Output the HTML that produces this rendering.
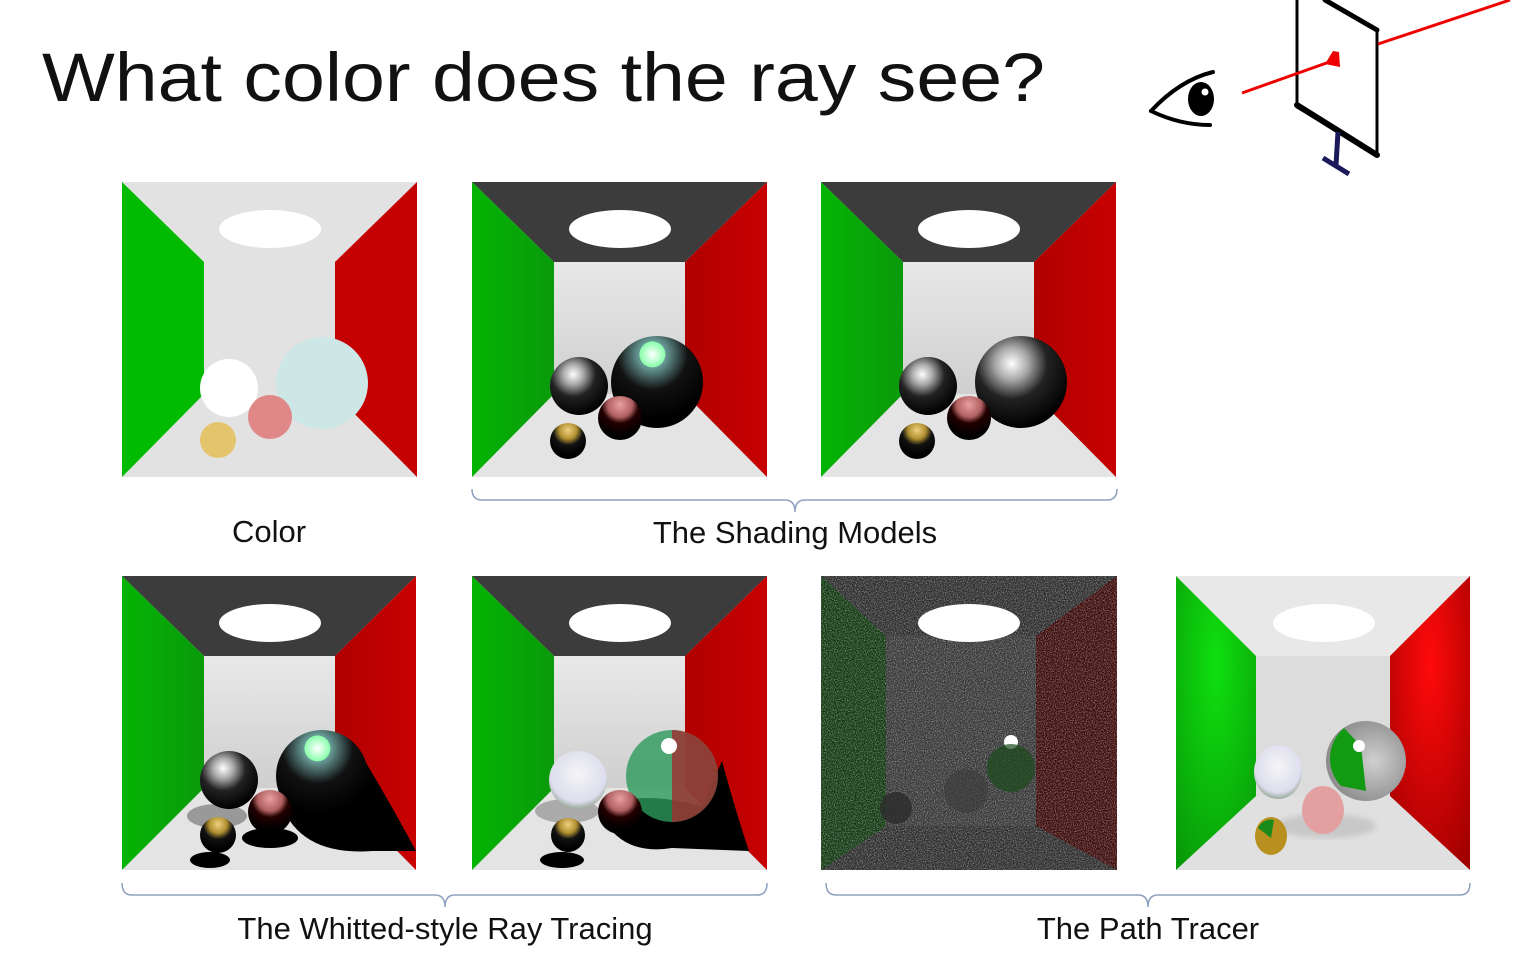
<!DOCTYPE html>
<html><head><meta charset="utf-8"><style>
html,body{margin:0;padding:0;background:#fff;width:1519px;height:967px;overflow:hidden}
svg{display:block}
text{font-family:"Liberation Sans",sans-serif;fill:#111}
</style></head><body>
<svg width="1519" height="967" viewBox="0 0 1519 967" xmlns="http://www.w3.org/2000/svg">
<defs>
<radialGradient id="blk" cx="0.4" cy="0.3" r="0.7"><stop offset="0" stop-color="#fff"/><stop offset="0.25" stop-color="#aaa"/><stop offset="0.55" stop-color="#222"/><stop offset="1" stop-color="#000"/></radialGradient>
<radialGradient id="blkc" cx="0.45" cy="0.2" r="0.7"><stop offset="0" stop-color="#fff"/><stop offset="0.2" stop-color="#8fa"/><stop offset="0.2" stop-color="#6a9e9a"/><stop offset="0.55" stop-color="#111"/><stop offset="1" stop-color="#000"/></radialGradient>
<radialGradient id="pnk" cx="0.5" cy="0.2" r="0.7"><stop offset="0" stop-color="#e8a0a0"/><stop offset="0.4" stop-color="#b06060"/><stop offset="0.6" stop-color="#200"/><stop offset="1" stop-color="#000"/></radialGradient>
<radialGradient id="gld" cx="0.5" cy="0.2" r="0.7"><stop offset="0" stop-color="#f0d080"/><stop offset="0.35" stop-color="#b09030"/><stop offset="0.6" stop-color="#111"/><stop offset="1" stop-color="#000"/></radialGradient>
<linearGradient id="back" x1="0" y1="0" x2="0" y2="1"><stop offset="0" stop-color="#e8e8e8"/><stop offset="1" stop-color="#cfcfcf"/></linearGradient>
<linearGradient id="gw" x1="0" y1="0" x2="1" y2="0"><stop offset="0" stop-color="#04b404"/><stop offset="1" stop-color="#0a9a0a"/></linearGradient>
<linearGradient id="rw" x1="0" y1="0" x2="1" y2="0"><stop offset="0" stop-color="#b00000"/><stop offset="1" stop-color="#c80000"/></linearGradient>
<radialGradient id="gwp" cx="0.5" cy="0.3" r="0.8"><stop offset="0" stop-color="#0fe00f"/><stop offset="1" stop-color="#089a08"/></radialGradient>
<radialGradient id="rwp" cx="0.5" cy="0.3" r="0.8"><stop offset="0" stop-color="#ff0a0a"/><stop offset="1" stop-color="#a00000"/></radialGradient>
<radialGradient id="glass" cx="0.5" cy="0.4" r="0.6"><stop offset="0" stop-color="#f5f5f5"/><stop offset="0.8" stop-color="#dde"/><stop offset="1" stop-color="#9a9"/></radialGradient>
<radialGradient id="mir" cx="0.6" cy="0.5" r="0.6"><stop offset="0" stop-color="#d0d0d0"/><stop offset="1" stop-color="#8a8a8a"/></radialGradient>
<filter id="noise" x="0" y="0" width="100%" height="100%"><feTurbulence type="fractalNoise" baseFrequency="0.9" numOctaves="2" seed="3"/><feColorMatrix values="0 0 0 0 0.75  0 0 0 0 0.75  0 0 0 0 0.75  0 0 0 2 -0.85"/></filter>
<filter id="blur3"><feGaussianBlur stdDeviation="3"/></filter>
</defs>

<text x="42" y="101" style="font-size:69px" textLength="1003" lengthAdjust="spacingAndGlyphs">What color does the ray see?</text>

<g fill="none" stroke="#000" stroke-linecap="round">
<path d="M1151,111 Q1180,80 1213,72" stroke-width="4"/>
<path d="M1151,111 Q1180,125 1210,125" stroke-width="4"/>
<ellipse cx="1201" cy="99" rx="13" ry="17" fill="#000" stroke="none"/>
<circle cx="1205" cy="92" r="3.5" fill="#fff" stroke="none"/>
<path d="M1297,0 L1297,107 L1377,155 L1377,30" stroke-width="3"/>
<path d="M1297,105 L1377,155" stroke-width="6"/>
<path d="M1325,0 L1377,30" stroke-width="5"/>
</g>
<path d="M1338,132 L1336,165 M1323,158 L1349,174" stroke="#1a1a5a" stroke-width="5" fill="none"/>
<path d="M1242,93 L1335,60 M1378,44 L1510,0" stroke="#e00" stroke-width="3" fill="none"/>
<path d="M1333,51 L1339,52 L1340,67 L1325,64 Z" fill="#e00"/>

<g transform="translate(122,182)">
<rect width="295" height="295" fill="#e2e2e2"/>
<polygon points="0,0 82,80 82,212 0,295" fill="#00bb00"/>
<polygon points="295,0 213,80 213,212 295,295" fill="#c40000"/>
<ellipse cx="148" cy="47" rx="51" ry="19" fill="#fff"/>
<circle cx="200" cy="201" r="46" fill="#cde6e6"/>
<circle cx="107" cy="206" r="29" fill="#fff"/>
<circle cx="148" cy="235" r="22" fill="#e08888"/>
<circle cx="96" cy="258" r="18" fill="#e4c46c"/>
</g>

<g transform="translate(472,182)">
<rect width="295" height="295" fill="#e4e4e4"/>
<polygon points="0,0 295,0 213,80 82,80" fill="#3c3c3c"/>
<rect x="82" y="80" width="131" height="132" fill="url(#back)"/>
<polygon points="0,0 82,80 82,212 0,295" fill="url(#gw)"/>
<polygon points="295,0 213,80 213,212 295,295" fill="url(#rw)"/>
<ellipse cx="148" cy="47" rx="51" ry="19" fill="#fff"/>
<circle cx="185" cy="200" r="46" fill="url(#blkc)"/>
<circle cx="107" cy="204" r="29" fill="url(#blk)"/>
<circle cx="148" cy="236" r="22" fill="url(#pnk)"/>
<circle cx="96" cy="259" r="18" fill="url(#gld)"/>
</g>
<g transform="translate(821,182)">
<rect width="295" height="295" fill="#e4e4e4"/>
<polygon points="0,0 295,0 213,80 82,80" fill="#3c3c3c"/>
<rect x="82" y="80" width="131" height="132" fill="url(#back)"/>
<polygon points="0,0 82,80 82,212 0,295" fill="url(#gw)"/>
<polygon points="295,0 213,80 213,212 295,295" fill="url(#rw)"/>
<ellipse cx="148" cy="47" rx="51" ry="19" fill="#fff"/>
<circle cx="200" cy="200" r="46" fill="url(#blk)"/>
<circle cx="107" cy="204" r="29" fill="url(#blk)"/>
<circle cx="148" cy="236" r="22" fill="url(#pnk)"/>
<circle cx="96" cy="259" r="18" fill="url(#gld)"/>
</g>

<g transform="translate(122,576)">
<rect width="294" height="294" fill="#e4e4e4"/>
<polygon points="0,0 294,0 213,80 82,80" fill="#3c3c3c"/>
<rect x="82" y="80" width="131" height="132" fill="url(#back)"/>
<polygon points="0,0 82,80 82,212 0,294" fill="url(#gw)"/>
<polygon points="294,0 213,80 213,212 294,294" fill="url(#rw)"/>
<ellipse cx="148" cy="47" rx="51" ry="19" fill="#fff"/>
<path d="M160,230 Q220,230 240,180 Q270,230 294,275 L250,275 Q180,280 160,230Z" fill="#000"/>
<ellipse cx="95" cy="240" rx="30" ry="12" fill="#999"/>
<ellipse cx="148" cy="262" rx="28" ry="10" fill="#000"/>
<ellipse cx="88" cy="284" rx="20" ry="8" fill="#000"/>
<circle cx="200" cy="200" r="46" fill="url(#blkc)"/>
<circle cx="107" cy="204" r="29" fill="url(#blk)"/>
<circle cx="148" cy="236" r="22" fill="url(#pnk)"/>
<circle cx="96" cy="259" r="18" fill="url(#gld)"/>
</g>
<g transform="translate(472,576)">
<rect width="295" height="294" fill="#e4e4e4"/>
<polygon points="0,0 295,0 213,80 82,80" fill="#3c3c3c"/>
<rect x="82" y="80" width="131" height="132" fill="url(#back)"/>
<polygon points="0,0 82,80 82,212 0,294" fill="url(#gw)"/>
<polygon points="295,0 213,80 213,212 295,294" fill="url(#rw)"/>
<ellipse cx="148" cy="47" rx="51" ry="19" fill="#fff"/>
<path d="M130,240 Q150,210 230,230 L250,185 Q265,240 277,275 L200,272 Q150,280 130,240Z" fill="#000"/>
<ellipse cx="95" cy="235" rx="32" ry="12" fill="#aaa"/>
<ellipse cx="90" cy="284" rx="22" ry="8" fill="#000"/>
<circle cx="200" cy="200" r="46" fill="#2a9a5a" opacity="0.8"/>
<path d="M200,154 A46,46 0 0 1 200,246 Z" fill="#a03030" opacity="0.8"/>
<circle cx="197" cy="170" r="8" fill="#fff"/>
<circle cx="106" cy="204" r="29" fill="url(#glass)"/>
<circle cx="148" cy="236" r="22" fill="url(#pnk)"/>
<circle cx="96" cy="259" r="17" fill="url(#gld)"/>
</g>

<g transform="translate(821,576)">
<rect width="296" height="294" fill="#2e2e2e"/>
<polygon points="0,0 65,60 65,250 0,294" fill="#123a12"/>
<polygon points="296,0 215,60 215,250 296,294" fill="#3e0c0c"/>
<rect x="65" y="60" width="150" height="190" fill="#383838"/>
<rect width="296" height="294" filter="url(#noise)" opacity="0.7"/>
<ellipse cx="148" cy="47" rx="51" ry="19" fill="#fff"/>
<circle cx="190" cy="166" r="7" fill="#fff"/>
<circle cx="190" cy="192" r="24" fill="#1a4a1a" opacity="0.7"/>
<circle cx="75" cy="232" r="16" fill="#2a2a2a" opacity="0.8"/>
<circle cx="145" cy="215" r="22" fill="#3a3a3a" opacity="0.6"/>
</g>

<g transform="translate(1176,576)">
<rect width="294" height="294" fill="#e0e0e0"/>
<polygon points="0,0 294,0 214,80 80,80" fill="#e8e8e8"/>
<rect x="80" y="80" width="134" height="140" fill="#dcdcdc"/>
<polygon points="0,0 80,80 80,220 0,294" fill="url(#gwp)"/>
<polygon points="294,0 214,80 214,220 294,294" fill="url(#rwp)"/>
<ellipse cx="148" cy="47" rx="51" ry="19" fill="#fff"/>
<ellipse cx="150" cy="250" rx="50" ry="12" fill="#c8c8c8" filter="url(#blur3)"/>
<circle cx="190" cy="185" r="40" fill="url(#mir)"/>
<path d="M168,152 A40,40 0 0 0 165,210 L190,215 L185,170 Z" fill="#129a12"/>
<circle cx="183" cy="170" r="6" fill="#fff"/>
<ellipse cx="102" cy="196" rx="24" ry="27" fill="url(#glass)"/>
<ellipse cx="147" cy="234" rx="21" ry="24" fill="#e4a0a0"/>
<ellipse cx="95" cy="260" rx="16" ry="19" fill="#b89020"/>
<path d="M82,252 A14,14 0 0 1 98,244 L95,262Z" fill="#1a8a1a"/>
</g>

<g fill="none" stroke="#8ea0c0" stroke-width="1.5">
<path d="M472,489 Q472,500 482,500 L785,500 Q795,500 795,512 Q795,500 805,500 L1107,500 Q1117,500 1117,489"/>
<path d="M122,883 Q122,895 132,895 L435,895 Q445,895 445,907 Q445,895 455,895 L757,895 Q767,895 767,883"/>
<path d="M826,883 Q826,895 836,895 L1138,895 Q1148,895 1148,907 Q1148,895 1158,895 L1460,895 Q1470,895 1470,883"/>
</g>

<g style="font-size:31px">
<text x="269" y="542" text-anchor="middle">Color</text>
<text x="795" y="543" text-anchor="middle">The Shading Models</text>
<text x="445" y="939" text-anchor="middle">The Whitted-style Ray Tracing</text>
<text x="1148" y="939" text-anchor="middle">The Path Tracer</text>
</g>
</svg>
</body></html>
